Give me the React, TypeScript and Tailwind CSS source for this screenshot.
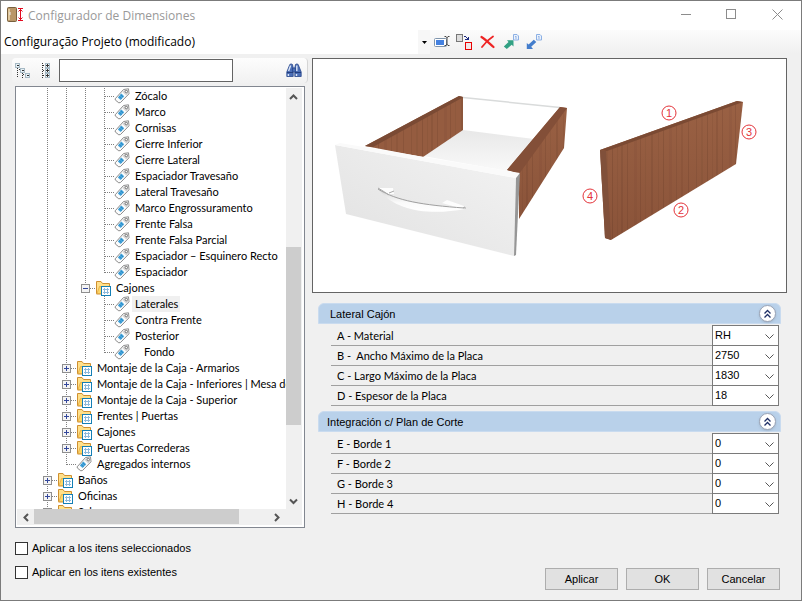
import type { ReactNode } from "react";

type Guide = "line" | "tee" | "end" | "plus" | "minus";

type TreeItem = {
  label: string;
  level: number;
  kind: "tag" | "folder";
  node: Guide;
  selected?: boolean;
  padded?: boolean;
};

const tree: TreeItem[] = [
  { label: "Zócalo", level: 3, kind: "tag", node: "tee" },
  { label: "Marco", level: 3, kind: "tag", node: "tee" },
  { label: "Cornisas", level: 3, kind: "tag", node: "tee" },
  { label: "Cierre Inferior", level: 3, kind: "tag", node: "tee" },
  { label: "Cierre Lateral", level: 3, kind: "tag", node: "tee" },
  { label: "Espaciador Travesaño", level: 3, kind: "tag", node: "tee" },
  { label: "Lateral Travesaño", level: 3, kind: "tag", node: "tee" },
  { label: "Marco Engrossuramento", level: 3, kind: "tag", node: "tee" },
  { label: "Frente Falsa", level: 3, kind: "tag", node: "tee" },
  { label: "Frente Falsa Parcial", level: 3, kind: "tag", node: "tee" },
  { label: "Espaciador – Esquinero Recto", level: 3, kind: "tag", node: "tee" },
  { label: "Espaciador", level: 3, kind: "tag", node: "end" },
  { label: "Cajones", level: 2, kind: "folder", node: "minus" },
  { label: "Laterales", level: 3, kind: "tag", node: "tee", selected: true },
  { label: "Contra Frente", level: 3, kind: "tag", node: "tee" },
  { label: "Posterior", level: 3, kind: "tag", node: "tee" },
  { label: "Fondo", level: 3, kind: "tag", node: "end", padded: true },
  { label: "Montaje de la Caja - Armarios", level: 1, kind: "folder", node: "plus" },
  { label: "Montaje de la Caja - Inferiores | Mesa de", level: 1, kind: "folder", node: "plus" },
  { label: "Montaje de la Caja - Superior", level: 1, kind: "folder", node: "plus" },
  { label: "Frentes | Puertas", level: 1, kind: "folder", node: "plus" },
  { label: "Cajones", level: 1, kind: "folder", node: "plus" },
  { label: "Puertas Correderas", level: 1, kind: "folder", node: "plus" },
  { label: "Agregados internos", level: 1, kind: "tag", node: "end" },
  { label: "Baños", level: 0, kind: "folder", node: "plus" },
  { label: "Oficinas", level: 0, kind: "folder", node: "plus" },
  { label: "Salas", level: 0, kind: "folder", node: "plus" },
];

const sections = [
  {
    title: "Lateral Cajón",
    indent: "pl-[11px]",
    fields: [
      { id: "a", label: "A - Material", value: "RH" },
      { id: "b", label: "B -  Ancho Máximo de la Placa", value: "2750" },
      { id: "c", label: "C - Largo Máximo de la Placa", value: "1830" },
      { id: "d", label: "D - Espesor de la Placa", value: "18" },
    ],
  },
  {
    title: "Integración c/ Plan de Corte",
    indent: "pl-2",
    fields: [
      { id: "e", label: "E - Borde 1", value: "0" },
      { id: "f", label: "F - Borde 2", value: "0" },
      { id: "g", label: "G - Borde 3", value: "0" },
      { id: "h", label: "H - Borde 4", value: "0" },
    ],
  },
];

// wood grain: x offset, width, opacity
const grain = [
  [3, 1, 0.1], [8, 2, 0.06], [14, 1, 0.14], [19, 1, 0.07], [23, 2, 0.1], [29, 1, 0.12],
  [36, 3, 0.05], [42, 1, 0.12], [47, 1, 0.06], [53, 2, 0.1], [60, 1, 0.07], [65, 1, 0.14],
  [71, 3, 0.05], [78, 1, 0.1], [83, 2, 0.08], [90, 1, 0.12],
];

function GuideCell({ type }: { type: Guide }) {
  const box = type === "plus" || type === "minus";
  return (
    <svg width="19" height="16" className="shrink-0" shapeRendering="crispEdges" stroke="#808080">
      <path d={type === "end" || type === "minus" ? "M9.5 0V9" : "M9.5 0V16"} strokeDasharray="1 1" />
      {type !== "line" && <path d="M10 8.5H19" strokeDasharray="1 1" />}
      {box && <rect x="5.5" y="4.5" width="8" height="8" fill="#f4f4f4" stroke="#8f8f8f" />}
      {box && <path d="M7 8.5H12" stroke="#33479b" />}
      {type === "plus" && <path d="M9.5 6V11" stroke="#33479b" />}
    </svg>
  );
}

function TagIcon() {
  return (
    <svg width="16" height="16" className="shrink-0">
      <path d="M1.2 10.8L9.5 1.5L14.5 .8L15 5.8L6.5 14.5L4.8 14.8L1.3 12Z" fill="#fcfcfc" stroke="#8c8c8c" />
      <path d="M9.8 2.2L14 1.5L14.3 5.6L12.2 7.6L8.4 4Z" fill="#d6d6d6" />
      <path d="M7.4 5.6L10.2 8.2L6.6 12L3.8 9.6Z" fill="#45a5dc" />
      <path d="M6.5 6.6L9.2 9M4.9 8.3L7.8 10.8" stroke="#1f78b4" strokeWidth=".6" />
      <circle cx="12.3" cy="3.6" r="1.2" fill="#fff" stroke="#777" />
    </svg>
  );
}

function FolderIcon() {
  return (
    <svg width="16" height="16" className="shrink-0">
      <path d="M1.5 13.5V1.5H6L7.5 3.5H14.5V12L12 14H1.5Z" fill="#ffe08a" stroke="#cf9030" />
      <path d="M2 13.5L4.5 6.5H15L12.5 13.5Z" fill="#ffd766" stroke="#dca23f" strokeWidth=".7" />
      <rect x="6.5" y="6.5" width="9" height="9" fill="#fff" stroke="#147fb5" />
      <path d="M8 9.5H14M8 12.5H14M9.5 8V14M12.5 8V14" stroke="#8cb9dc" />
    </svg>
  );
}

function TreeRow({ item }: { item: TreeItem }) {
  const guides: Guide[] = [];
  for (let i = 0; i < item.level; i++) guides.push("line");
  guides.push(item.node);
  return (
    <li className="flex h-4 items-center whitespace-nowrap pl-[21px]">
      {guides.map((g, i) => (
        <GuideCell key={i} type={g} />
      ))}
      {item.kind === "tag" ? <TagIcon /> : <FolderIcon />}
      <span
        className={`ml-0.5 h-4 pr-0.5 leading-4 ${item.selected ? "bg-[#f0f0f0]" : ""} ${
          item.padded ? "pl-3" : "pl-[3px]"
        }`}
      >
        {item.label}
      </span>
    </li>
  );
}

function ScrollButton({ label, d }: { label: string; d: string }) {
  return (
    <button type="button" aria-label={label} className="flex size-4 shrink-0 items-center">
      <svg width="15" height="15" fill="none" stroke="#555" strokeWidth="2">
        <path d={d} />
      </svg>
    </button>
  );
}

function Tree() {
  return (
    <div className="mx-[3px] flex min-h-0 flex-1 flex-col border border-[#828790] bg-white p-px pr-0.5 pb-0.5">
      <div className="flex min-h-0 flex-1">
        <ul className="min-w-0 flex-1 overflow-hidden font-[Lato,sans-serif]">
          {tree.map((item, i) => (
            <TreeRow key={i} item={item} />
          ))}
        </ul>
        <div className="flex w-4 shrink-0 flex-col bg-[#f0f0f0]">
          <ScrollButton label="Subir" d="M4 10L7.5 6.5L11 10" />
          <div className="flex-[142]" />
          <div className="mr-px flex-[177] bg-[#cdcdcd]" />
          <div className="flex-[68]" />
          <ScrollButton label="Bajar" d="M4 5.5L7.5 9L11 5.5" />
        </div>
      </div>
      <div className="flex h-4 shrink-0 bg-[#f0f0f0] pl-px pr-4">
        <ScrollButton label="Izquierda" d="M10 4L6.5 7.5L10 11" />
        <div className="mb-px flex-[206] bg-[#cdcdcd]" />
        <div className="flex-[31]" />
        <ScrollButton label="Derecha" d="M5 4L8.5 7.5L5 11" />
      </div>
    </div>
  );
}

function ToolButton({ label, children }: { label: string; children: ReactNode }) {
  return (
    <button type="button" aria-label={label} className="flex h-6 w-[23px] items-center justify-center">
      {children}
    </button>
  );
}

function ProjectBar() {
  return (
    <div className="flex h-6 shrink-0 bg-linear-to-b from-[#fcfcfc] to-[#f0f0f0]">
      <div className="relative w-[429px] bg-white">
        <select
          aria-label="Configuração"
          className="h-6 w-full appearance-none bg-transparent pl-[3px] font-['Open_Sans',sans-serif] text-xs text-black"
        >
          <option>Configuração Projeto (modificado)</option>
        </select>
        <span className="pointer-events-none absolute inset-y-0 right-0 flex w-3 items-center justify-center bg-[#f7f7f7]">
          <svg width="5" height="3">
            <path d="M0 0H5L2.5 3Z" fill="#000" />
          </svg>
        </span>
      </div>
      <ToolButton label="Renombrar">
        <svg width="16" height="16" fill="none">
          <rect x=".5" y="4.5" width="12" height="8" rx="1" fill="#fff" stroke="#7f95ad" />
          <rect x="2" y="6" width="8" height="5" fill="#4481e0" />
          <path d="M10.5 2.5H12L13 3.5L14 2.5H15.5M13 3V11M10.5 11.5H12L13 10.5L14 11.5H15.5" stroke="#333" strokeWidth=".9" />
        </svg>
      </ToolButton>
      <ToolButton label="Duplicar">
        <svg width="17" height="17" fill="none" shapeRendering="crispEdges">
          <rect x=".5" y=".5" width="6" height="7" fill="#ddd" stroke="#777" />
          <path d="M8 2.5H10M10.5 3V4M11.5 4V6M9 5.5H13M12.5 3V6" stroke="#1d2b80" />
          <rect x="9.5" y="8.5" width="6" height="7" fill="#f0e8e8" stroke="#e80000" />
        </svg>
      </ToolButton>
      <ToolButton label="Eliminar">
        <svg width="15" height="14" fill="none" stroke="#ee2424" strokeLinecap="round">
          <path d="M1.5 2C5 4 10 9 13.5 12" strokeWidth="2.2" />
          <path d="M13 1.5C9 4 5 8 2 12" strokeWidth="1.8" />
        </svg>
      </ToolButton>
      <ToolButton label="Exportar">
        <svg width="16" height="16">
          <path d="M.8 12.5L5.5 8L4 6.2H10.5V12.5L8.7 10.8L3.8 15Z" fill="#32a184" />
          <path d="M10.5 .5H14L15.5 2V6H10.5Z" fill="#eaf2fd" stroke="#8cb0e4" />
          <path d="M12 2.5H13.5M12 4H14" stroke="#7199d5" strokeWidth=".7" />
        </svg>
      </ToolButton>
      <ToolButton label="Importar">
        <svg width="16" height="16">
          <path d="M.8 15V9L2.6 10.6L7.8 5.8L10.3 8L5.2 12.8L7 15Z" fill="#437dcc" />
          <path d="M10.5 .5H14L15.5 2V6H10.5Z" fill="#eaf2fd" stroke="#8cb0e4" />
          <path d="M12 2.5H13.5M12 4H14" stroke="#7199d5" strokeWidth=".7" />
        </svg>
      </ToolButton>
    </div>
  );
}

function TreeBar() {
  return (
    <div className="mb-[3px] flex h-[25px] shrink-0 items-center rounded border-r border-[#d5d5d5] bg-linear-to-b from-[#fdfdfd] to-[#f1f1f1] pl-px pr-[5px]">
      <button type="button" aria-label="Contraer" className="flex w-5 justify-center">
        <svg width="16" height="16" fill="none" shapeRendering="crispEdges">
          <path d="M2.5 5V15M7.5 10V15M4 6.5H5M8 11.5H10" stroke="#333" strokeDasharray="1 1" />
          <path d="M.5 .5H4.5V4.5H.5ZM5.5 5.5H9.5V9.5H5.5ZM10.5 10.5H14.5V14.5H10.5Z" fill="#e6f0f5" stroke="#a6b9c4" />
          <path d="M2 2.5H4M7 7.5H9M12 12.5H14" stroke="#333" />
        </svg>
      </button>
      <button type="button" aria-label="Expandir" className="ml-[3px] flex w-5 justify-center">
        <svg width="10" height="16" fill="none" shapeRendering="crispEdges">
          <path d="M1.5 0V16M2 2.5H4M2 7.5H4M2 12.5H4" stroke="#333" strokeDasharray="1 1" />
          <path d="M4.5 .5H8.5V4.5H4.5ZM4.5 5.5H8.5V9.5H4.5ZM4.5 10.5H8.5V14.5H4.5Z" fill="#f4f9fb" stroke="#a6b9c4" />
          <path d="M5 2.5H8M5 7.5H8M5 12.5H8M6.5 1V4M6.5 6V9M6.5 11V14" stroke="#333" />
        </svg>
      </button>
      <input
        type="text"
        aria-label="Buscar"
        className="ml-[3px] h-[23px] w-[174px] border border-[#646464] bg-white px-1 outline-none"
      />
      <button type="button" aria-label="Buscar siguiente" className="ml-auto">
        <svg width="16" height="15" fill="#4a6db5" stroke="#2a478c" strokeWidth=".8">
          <path d="M3.8 1.5Q5 .3 6.5 1.5L7.2 5V13.5H.8V9Z" />
          <path d="M12.2 1.5Q11 .3 9.5 1.5L8.8 5V13.5H15.2V9Z" />
          <path d="M6.5 5H9.5V9H6.5Z" />
          <path d="M4.6 2.5L2.6 8M10.8 2.5V8M2.4 11V13M10.5 11V13" fill="none" stroke="#dbe6f8" strokeWidth="1.4" />
          <path d="M1 9.5H7M9 9.5H15" stroke="#1c3370" />
        </svg>
      </button>
    </div>
  );
}

function Preview() {
  return (
    <div className="flex justify-center border border-[#646464] bg-white">
      <svg width="473" height="233" viewBox="0 0 473 233">
        <defs>
          <pattern id="grain" width="95" height="240" patternUnits="userSpaceOnUse">
            {grain.map(([x, w, o]) => (
              <rect key={x} x={x} width={w} height="240" fill="#3a1d10" opacity={o} />
            ))}
          </pattern>
          <linearGradient id="front" x1="0" y1="1" x2="1" y2="0">
            <stop offset="0" stopColor="#e1e1e1" />
            <stop offset="1" stopColor="#f3f3f3" />
          </linearGradient>
          <linearGradient id="floor" x1="0" y1="0" x2="0" y2="1">
            <stop offset="0" stopColor="#e8e8e8" />
            <stop offset="1" stopColor="#f9f9f9" />
          </linearGradient>
          <linearGradient id="grip" x1="0" y1="0" x2="0" y2="1">
            <stop offset="0" stopColor="#d5d5d5" />
            <stop offset=".6" stopColor="#fafafa" />
            <stop offset="1" stopColor="#fff" />
          </linearGradient>
          <linearGradient id="shade" x1="0" y1="0" x2="0" y2="1">
            <stop offset="0" stopColor="#9a6144" />
            <stop offset="1" stopColor="#8a5339" />
          </linearGradient>
        </defs>

        {/* drawer box */}
        <path d="M150 71L221 80L194 112L110 97Z" fill="url(#floor)" />
        <path d="M52 87L146 37L150 38V71L110 98Z" fill="#955c40" />
        <path d="M52 87L146 37L150 38V71L110 98Z" fill="url(#grain)" />
        <path d="M52 87L146 37L150 38L147 40L60 88Z" fill="#7a4a34" />
        <path d="M150 38.5L247 48.5" stroke="#d9dbdb" strokeWidth="1.5" />
        <path d="M247 48L254 49L251 89L206 160V114L194 111Z" fill="url(#shade)" />
        <path d="M254 49L251 89L206 160V114Z" fill="url(#grain)" />
        <path d="M247 48L254 49L206 115L194 111Z" fill="#834f38" />

        {/* drawer front */}
        <path d="M22 86L203 119L201 197L33 155Z" fill="url(#front)" />
        <path d="M22 86L27 84L207 114L203 119Z" fill="#fafafa" />
        <path d="M203 119L207 114L203 196L201 197Z" fill="#969696" />
        <path d="M66 129L80 129L81 135L72 135ZM129 144L134 141L151 147L150 150Z" fill="#fdfdfd" />
        <path d="M65 130C84 143 112 147 152 148V150C120 156 84 154 65 130Z" fill="url(#grip)" />
        <path d="M65 130C84 142 110 146 151 149" fill="none" stroke="#a0a0a0" />
        <path d="M65 129L70 132L76 136M76 134L81 132M150 149L152 148V150" fill="none" stroke="#a8a8a8" />

        {/* side board */}
        <path d="M287 91L424 42L430 43L423 105L298 181L292 179Z" fill="url(#shade)" />
        <path d="M287 91L424 42L430 43L423 105L298 181L292 179Z" fill="url(#grain)" />
        <path d="M287 91L424 42L430 43L294 92Z" fill="#7b4a33" />
        <path d="M287 91L293 92L298 181L292 179Z" fill="#80503a" />

        <g fill="none" stroke="#e4343a">
          <circle cx="356" cy="54" r="7" />
          <circle cx="368" cy="151" r="7" />
          <circle cx="436" cy="73" r="7" />
          <circle cx="277" cy="137" r="7" />
        </g>
        <g fill="#e4343a" fontSize="11" textAnchor="middle" fontFamily="Liberation Sans, sans-serif">
          <text x="356" y="58">1</text>
          <text x="368" y="155">2</text>
          <text x="436" y="77">3</text>
          <text x="277" y="141">4</text>
        </g>
      </svg>
    </div>
  );
}

function Section({ section }: { section: (typeof sections)[number] }) {
  return (
    <section className="mb-[5px]">
      <header
        className={`mb-px flex h-[21px] items-center justify-between rounded-t-md border border-[#c9dbef] bg-[#b9d1ea] pr-1 ${section.indent}`}
      >
        <h2>{section.title}</h2>
        <button
          type="button"
          aria-label="Contraer sección"
          className="flex size-[17px] items-center justify-center rounded-full border border-[#9aa3b5] bg-white shadow-sm"
        >
          <svg width="9" height="10" fill="none" stroke="#1f2f66" strokeWidth="1.3">
            <path d="M1.5 4.5L4.5 1.5L7.5 4.5M1.5 8.5L4.5 5.5L7.5 8.5" />
          </svg>
        </button>
      </header>
      <div className="ml-[13px] mr-0.5">
        <table className="w-full border-separate border-spacing-0">
          <tbody className="[&>tr:first-child>*]:border-t">
            {section.fields.map((f) => (
              <tr key={f.id}>
                <th scope="row" className="border-b border-t-transparent border-b-[#a0a0a0] p-0 pl-1.5 text-left font-normal">
                  <label htmlFor={f.id} className="whitespace-pre font-[Lato,sans-serif]">
                    {f.label}
                  </label>
                </th>
                <td className="w-[67px] border-x border-b border-[#7a7a7a] bg-white p-0">
                  <div className="relative">
                    <select
                      id={f.id}
                      className="block h-[19px] w-full appearance-none bg-transparent pb-0.5 pl-0.5 text-[11px] leading-4"
                    >
                      <option>{f.value}</option>
                    </select>
                    <svg
                      width="9"
                      height="6"
                      fill="none"
                      stroke="#555"
                      className="pointer-events-none absolute right-1 top-2"
                    >
                      <path d="M.5 .5L4.5 4.5L8.5 .5" />
                    </svg>
                  </div>
                </td>
              </tr>
            ))}
          </tbody>
        </table>
      </div>
    </section>
  );
}

function Check({ label }: { label: string }) {
  return (
    <label className="flex h-6 items-center gap-1">
      <input type="checkbox" className="size-[13px] appearance-none border border-[#333] bg-white checked:bg-[#333]" />
      {label}
    </label>
  );
}

export default function App() {
  return (
    <div className="flex h-screen flex-col border border-[#7b7b7b] bg-[#f0f0f0] font-['Liberation_Sans',Arial,sans-serif] text-[11px] leading-4 text-black">
      <header className="flex h-[29px] shrink-0 items-center bg-white pl-1.5">
        <svg width="17" height="17" className="shrink-0">
          <rect x=".5" y=".5" width="9" height="14" rx="1" fill="#b99767" stroke="#78603e" />
          <path d="M2 2V13" stroke="#e0c79c" strokeWidth="2" />
          <path d="M3 5V8" stroke="#efefef" />
          <path d="M11 1.5H16M11 13.5H16M13.5 2V13M11.5 4.5L13.5 2.5L15.5 4.5M11.5 10.5L13.5 12.5L15.5 10.5" fill="none" stroke="#e20b20" />
        </svg>
        <h1 className="ml-1 font-['Open_Sans',sans-serif] text-xs text-[#999]">Configurador de Dimensiones</h1>
        <div className="ml-auto flex h-full pb-0.5">
          <button type="button" aria-label="Minimizar" className="flex w-[45px] items-center justify-center">
            <svg width="11" height="11" stroke="#8c8c8c" fill="none">
              <path d="M0 5.5H10" />
            </svg>
          </button>
          <button type="button" aria-label="Maximizar" className="flex w-[45px] items-center justify-center">
            <svg width="11" height="11" stroke="#8c8c8c" fill="none">
              <rect x=".5" y=".5" width="9" height="9" />
            </svg>
          </button>
          <button type="button" aria-label="Cerrar" className="flex w-[47px] items-center justify-center">
            <svg width="11" height="11" stroke="#8c8c8c" fill="none">
              <path d="M.5 .5L10.5 10.5M10.5 .5L.5 10.5" />
            </svg>
          </button>
        </div>
      </header>
      <ProjectBar />
      <main className="flex min-h-0 flex-1 gap-1 pl-[11px] pr-3.5 pt-1">
        <div className="flex w-[296px] shrink-0 flex-col">
          <TreeBar />
          <Tree />
          <div className="shrink-0 pb-4 pl-[3px] pt-2">
            <Check label="Aplicar a los itens seleccionados" />
            <Check label="Aplicar en los itens existentes" />
          </div>
        </div>
        <div className="flex min-w-0 flex-1 flex-col">
          <Preview />
          <div className="mt-2.5 px-1.5">
            {sections.map((s) => (
              <Section key={s.title} section={s} />
            ))}
          </div>
          <div className="mb-2.5 mr-[7px] mt-auto flex justify-end gap-2">
            {["Aplicar", "OK", "Cancelar"].map((b) => (
              <button key={b} type="button" className="h-[22px] w-[73px] border border-[#adadad] bg-[#e1e1e1]">
                {b}
              </button>
            ))}
          </div>
        </div>
      </main>
    </div>
  );
}
